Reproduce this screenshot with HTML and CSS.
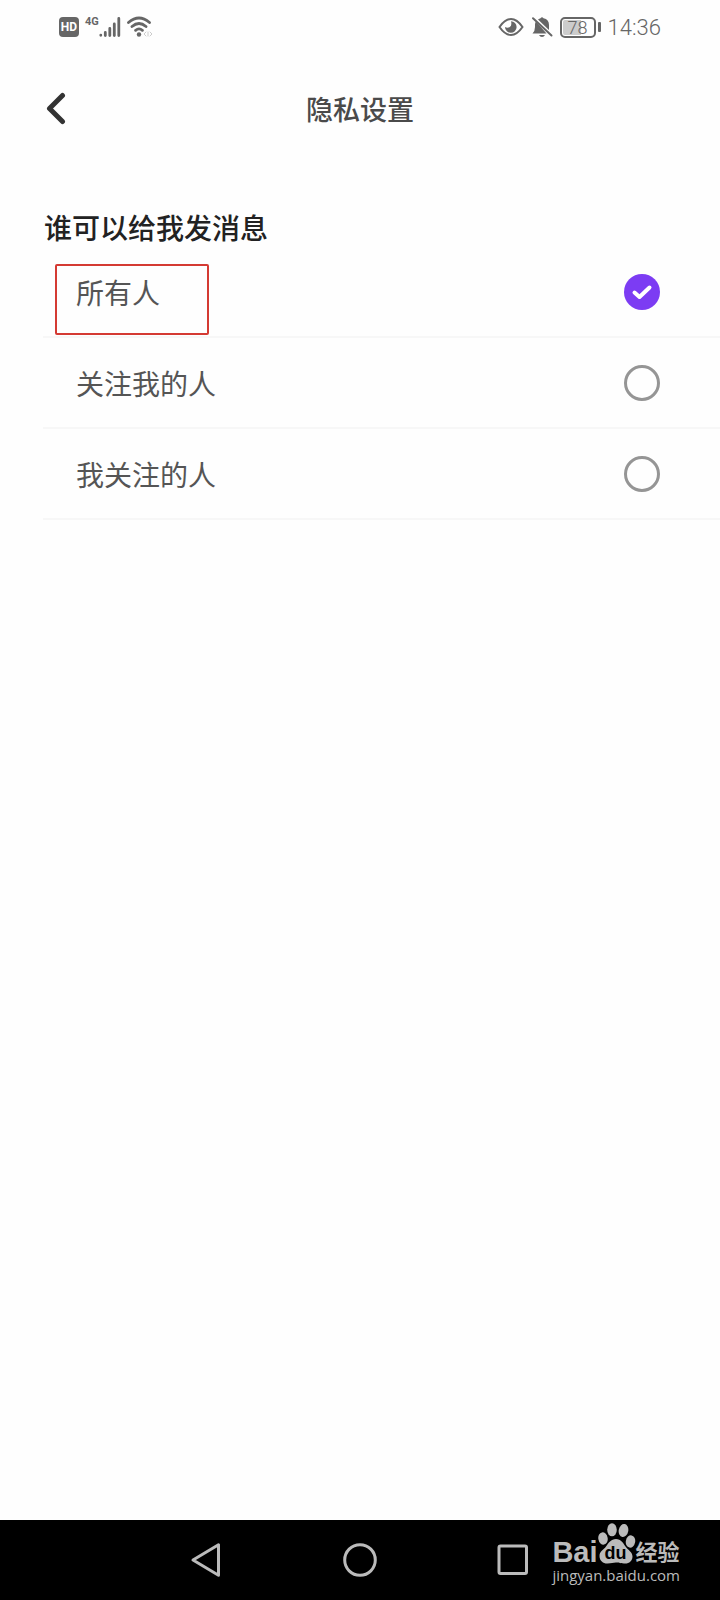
FILE: index.html
```html
<!DOCTYPE html>
<html lang="zh-CN">
<head>
<meta charset="utf-8">
<meta name="viewport" content="width=device-width, initial-scale=1">
<title>隐私设置</title>
<link rel="stylesheet" href="styles.css">
</head>
<body>
<div class="screen">
  <div class="status">
    <div class="status-group">
      <span class="hd">HD</span>
      <div class="signal">
        <span class="net">4G</span>
        <svg width="22" height="22" viewBox="0 0 22 22" fill="none" stroke="#666" stroke-width="2.800" stroke-linecap="round"><path d="M1.800 19.200v.1M6.300 16.500v3M10.800 12.500v7M15.300 8v11.500M19.800 2.500v17"/></svg>
      </div>
      <svg class="wifi" width="26" height="22" viewBox="0 0 26 22" fill="none" stroke="#666" stroke-width="2.800" stroke-linecap="round"><path d="M1.500 6.500Q12 -2.500 22.500 6.500M5 10.500Q12 4.500 19 10.500M8.600 14.300Q12 11.500 15.400 14.300"/><circle cx="12" cy="18.500" r="2.200" fill="#666" stroke="none"/><path d="M19 16l-2 2 2 2M23 16l2 2-2 2M21 16v4" stroke="#ccc" stroke-width="1"/></svg>
    </div>
    <div class="status-group right">
      <svg width="26" height="20" viewBox="0 0 26 20"><path d="M1.500 10Q7 2 13 2t11.500 8Q19 18 13 18T1.500 10Z" fill="none" stroke="#666" stroke-width="2"/><path d="M13 4.200a5.800 5.800 0 1 1-6 5.800q2.500 1.500 4.800 0T13 4.200Z" fill="#666"/></svg>
      <svg class="bell" width="22" height="22" viewBox="0 0 22 22"><path d="M1.500 17.500Q4 15 4 11V8.500Q4 6.500 5 5.500L15.500 17.500ZM7 3.500Q8.500 2.500 9.500 2.300 11 .300 12.500 2.300 18 3.500 18 9v5ZM8 19h6q-1 2-3 2t-3-2Z" fill="#666"/><path d="M2 2.200L20.500 19.500" stroke="#666" stroke-width="2" stroke-linecap="round"/></svg>
      <div class="battery"><span class="cell">78</span><span class="tip"></span></div>
      <time class="clock">14:36</time>
    </div>
  </div>

  <header class="bar">
    <button class="back" type="button" aria-label="返回">
      <svg width="22" height="34" viewBox="0 0 22 34" fill="none" stroke="#333" stroke-width="5" stroke-linecap="round" stroke-linejoin="round"><path d="M18.500 3.500L5.500 16.500 18.500 29.500"/></svg>
    </button>
    <h1 class="title">隐私设置</h1>
  </header>

  <main class="content">
    <h2 class="question" id="who">谁可以给我发消息</h2>
    <div class="options" role="radiogroup" aria-labelledby="who">
      <label class="option"><span>所有人</span><input class="radio" type="radio" name="sender" checked><i class="highlight"></i></label>
      <label class="option"><span>关注我的人</span><input class="radio" type="radio" name="sender"></label>
      <label class="option"><span>我关注的人</span><input class="radio" type="radio" name="sender"></label>
    </div>
  </main>

  <footer class="nav">
    <button class="key" type="button" aria-label="后退"><svg width="36" height="36" viewBox="0 0 36 36"><path d="M4 18L29.500 2.800v30.400Z"/></svg></button>
    <button class="key" type="button" aria-label="主页"><svg width="36" height="36" viewBox="0 0 36 36"><circle cx="18" cy="18" r="15.300"/></svg></button>
    <button class="key" type="button" aria-label="最近任务"><svg width="36" height="36" viewBox="0 0 36 36"><rect x="4" y="4" width="27.500" height="27.500" rx="1.500"/></svg></button>
    <div class="mark">
      <div class="brand">
        <span class="bai">Bai</span>
        <span class="paw">
          <svg width="38" height="42" viewBox="0 0 38 42" fill="#bbb"><ellipse cx="5" cy="15.500" rx="4.700" ry="6.200" transform="rotate(-10 5 15.500)"/><ellipse cx="14" cy="6.800" rx="4.800" ry="6.500"/><ellipse cx="25.500" cy="7.500" rx="4.800" ry="6.500" transform="rotate(10 25.500 7.500)"/><ellipse cx="32.500" cy="18.500" rx="4.700" ry="6.200" transform="rotate(10 32.500 18.500)"/><path d="M18 16c5 0 7 4 9.500 7.500s7 5.500 7 10-3.500 7.500-8.500 7-5-1-8-1-4.500.800-8.500 1-8-2.500-8-7.500 4-6 6.500-9.500 5-7.500 10-7.500Z"/></svg>
          <span class="du">du</span>
        </span>
        <span class="jy">经验</span>
      </div>
      <span class="url">jingyan.baidu.com</span>
    </div>
  </footer>
</div>
</body>
</html>
```
FILE: styles.css
```css
* {
  box-sizing: border-box;
}

body {
  margin: 0;
  background: #fefefe;
  font-family: "Liberation Sans", "Noto Sans CJK SC", sans-serif;
  color: #4a4a4a;
}

button {
  padding: 0;
  border: 0;
  background: none;
}

svg {
  display: block;
}

.screen {
  display: flex;
  flex-direction: column;
  min-height: 100vh;
}

.status {
  display: flex;
  justify-content: space-between;
  align-items: center;
  height: 54px;
  padding: 0 59px;
  color: #666;
}

.status-group {
  display: flex;
  align-items: center;
  gap: 6px;
}

.hd {
  width: 20px;
  border-radius: 4px;
  background: #666;
  color: #fff;
  font: bold 12px/20px Roboto, sans-serif;
  text-align: center;
}

.signal {
  display: flex;
  align-items: flex-start;
}

.net {
  font: bold 11px/12px Roboto, sans-serif;
}

.right {
  gap: 7px;
}

.battery {
  display: flex;
  align-items: center;
  gap: 2px;
}

.cell {
  width: 36px;
  border: 2px solid #666;
  border-radius: 5px;
  background: linear-gradient(90deg, #ccc 60%, #fefefe 60%) content-box;
  padding: 1px;
  font: 18px/15px Roboto, sans-serif;
  font-weight: 300;
  text-align: center;
}

.tip {
  width: 3px;
  height: 10px;
  border-radius: 1px;
  background: #666;
}

.clock {
  padding-top: 1px;
  font: 300 22px/28px Roboto, sans-serif;
}

.bar {
  display: grid;
  grid-template-columns: 44px 1fr 44px;
  align-items: center;
  height: 114px;
  padding: 0 44px;
}

.back {
  width: 44px;
  height: 38px;
}

.back svg {
  margin-bottom: 4px;
}

.title {
  margin: 0;
  font-size: 27px;
  font-weight: 500;
  line-height: 40px;
  text-align: center;
}

.content {
  flex: 1;
  padding: 45px 0 0 43px;
}

.question {
  margin: 0;
  padding-left: 1px;
  color: #222;
  font-size: 28px;
  font-weight: 500;
  line-height: 34px;
}

.option {
  position: relative;
  display: flex;
  align-items: center;
  justify-content: space-between;
  height: 91px;
  padding: 0 60px 0 33px;
  border-bottom: 2px solid #f7f7f7;
  color: #555;
  font-size: 28px;
  font-weight: 400;
}

.radio {
  appearance: none;
  width: 36px;
  height: 36px;
  margin: 0;
  border: 3px solid #959595;
  border-radius: 50%;
}

.radio:checked {
  border: 0;
  background: #7c3cf3 url("data:image/svg+xml,%3Csvg xmlns='http://www.w3.org/2000/svg' viewBox='0 0 36 36' fill='none' stroke='white' stroke-width='4' stroke-linecap='round' stroke-linejoin='round'%3E%3Cpath d='M10.500 18.500L15.500 23 25.500 13.500'/%3E%3C/svg%3E");
}

.highlight {
  position: absolute;
  left: 12px;
  top: 17px;
  width: 154px;
  height: 71px;
  border: 2px solid #d43a33;
  border-radius: 2px;
}

.nav {
  position: relative;
  display: flex;
  justify-content: center;
  align-items: center;
  gap: 105px;
  height: 80px;
  background: #000;
}

.key {
  display: flex;
  justify-content: center;
  width: 48px;
}

.key svg {
  fill: none;
  stroke: #bbb;
  stroke-width: 3;
  stroke-linejoin: round;
}

.mark {
  position: absolute;
  right: 40px;
  top: 3px;
  color: #bbb;
}

.brand {
  display: flex;
  align-items: flex-end;
  height: 42px;
}

.bai {
  font: bold 29px/26px "Liberation Sans", sans-serif;
}

.paw {
  position: relative;
}

.du {
  position: absolute;
  left: 0;
  bottom: 2px;
  width: 36px;
  color: #000;
  font: bold 18px/20px "Liberation Sans", sans-serif;
  text-align: center;
}

.jy {
  font-size: 22px;
  font-weight: 700;
  line-height: 24px;
}

.url {
  display: block;
  font: 15px/20px "Open Sans", sans-serif;
}
```
